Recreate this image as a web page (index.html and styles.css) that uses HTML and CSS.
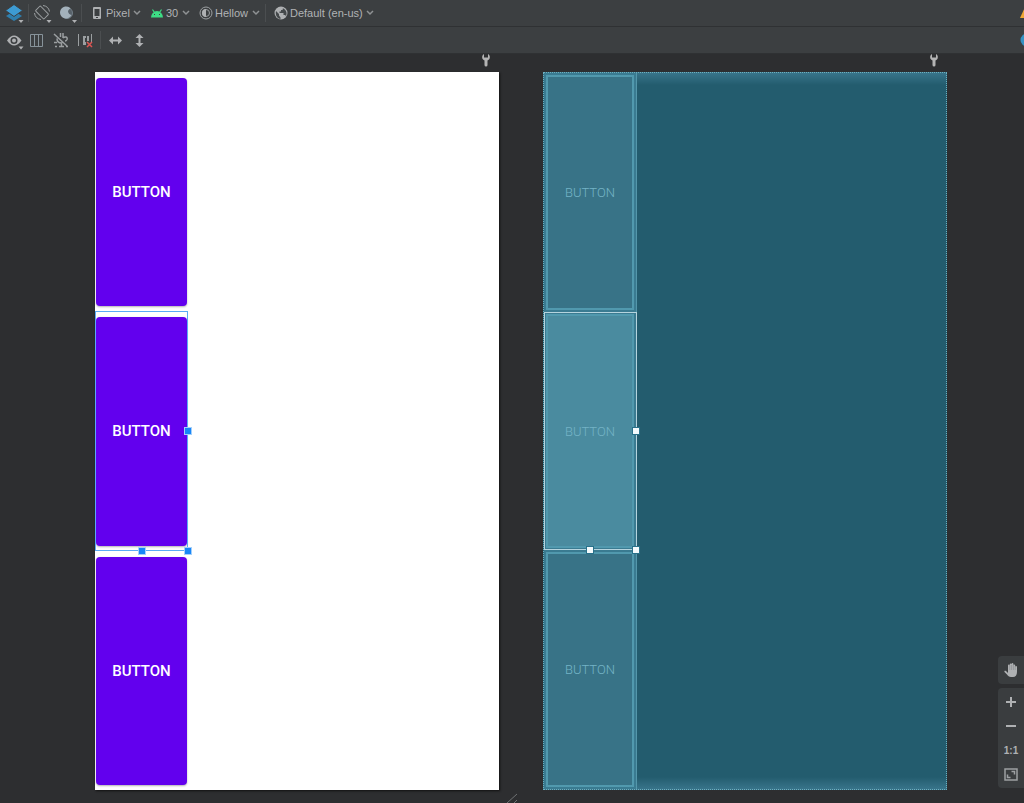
FILE: index.html
```
<!DOCTYPE html>
<html lang="en">
  <head>
    <meta charset="utf-8">
    <title>Layout Editor</title>
    <link rel="stylesheet" href="styles.css">
  </head>
  <body>
    <div class="toolbar">
      <button class="tool" aria-label="Select design surface">
        <svg width="20" height="20" viewBox="0 0 20 20"><path d="M10 8l8 5-8 5-8-5z" fill="#2f7fae"/><path d="M10 1.500l8.500 6L10 13.500 1.500 7.500z" fill="#3d9bd3" stroke="#3c3f41"/><path class="light" d="M14.500 17h5l-2.500 3z"/></svg>
      </button>
      <span class="separator"></span>
      <button class="tool" aria-label="Orientation">
        <svg width="20" height="20" viewBox="0 0 20 20"><g class="line"><rect x="5.500" y="3.500" width="7" height="12" rx="1" transform="rotate(-45 9 9.500)"/><path d="M10 2.500a7.500 7.500 0 0 1 6.500 6M8 16.500A7.500 7.500 0 0 1 1.500 10"/></g><path class="light" d="M13.500 17h5L16 20z"/></svg>
      </button>
      <button class="tool" aria-label="Night mode">
        <svg width="20" height="20" viewBox="0 0 20 20"><circle cx="10" cy="10" r="5.500" fill="#566068" stroke="#737f88"/><path d="M13.500 5.500A6 6 0 1 0 9 15.500a7 7 0 0 0 5.500-3.500A4.500 4.500 0 0 1 11 8a5 5 0 0 1 2.500-2.500z" fill="#a3b1bb"/><path class="light" d="M15 17h5l-2.500 3z"/></svg>
      </button>
      <span class="separator"></span>
      <label class="dropdown">
        <svg width="14" height="14" viewBox="0 0 14 14"><path class="light" fill-rule="evenodd" d="M4 1h6a1 1 0 0 1 1 1v10a1 1 0 0 1-1 1H4a1 1 0 0 1-1-1V2a1 1 0 0 1 1-1zm.500 2v7h5V3zM6 11v1h2v-1z"/></svg>
        <select aria-label="Device"><option>Pixel</option></select>
        <svg class="chevron" width="8" height="6" viewBox="0 0 8 6"><path d="M1 1l3 3 3-3"/></svg>
      </label>
      <label class="dropdown">
        <svg width="14" height="14" viewBox="0 0 14 14"><path d="M1 11.500a6 6.500 0 0 1 12 0z" fill="#3ddc84"/><path d="M2.500 3.500l2 3m7-3l-2 3" stroke="#3ddc84" stroke-width="1.200"/><path d="M4 8h1v1H4zm5 0h1v1H9z" fill="#3c3f41"/></svg>
        <select aria-label="API level"><option>30</option></select>
        <svg class="chevron" width="8" height="6" viewBox="0 0 8 6"><path d="M1 1l3 3 3-3"/></svg>
      </label>
      <label class="dropdown">
        <svg width="14" height="14" viewBox="0 0 14 14"><circle class="line" cx="7" cy="7" r="6"/><circle class="line" cx="7" cy="7" r="3.500"/><path class="light" d="M7 3a4 4 0 0 0 0 8z"/></svg>
        <select aria-label="Theme"><option>Hellow</option></select>
        <svg class="chevron" width="8" height="6" viewBox="0 0 8 6"><path d="M1 1l3 3 3-3"/></svg>
      </label>
      <span class="separator"></span>
      <label class="dropdown">
        <svg width="14" height="14" viewBox="0 0 14 14"><circle class="light" cx="7" cy="7" r="6.500"/><path d="M2 5l3 3v1.500l1.500 2V13C3.500 12.500 1 9.500 2 5zM8 2l1 .500-.500 1.500H7v1.500H5.500V7h4v2H11l1 1c1.500-3 0-7-4-8z" fill="#45494b"/></svg>
        <select aria-label="Locale"><option>Default (en-us)</option></select>
        <svg class="chevron" width="8" height="6" viewBox="0 0 8 6"><path d="M1 1l3 3 3-3"/></svg>
      </label>
      <button class="tool status" aria-label="Warnings">
        <svg width="14" height="14" viewBox="0 0 14 14"><path d="M0 12L5 1l7 11z" fill="#f0a732"/></svg>
      </button>
    </div>

    <div class="toolbar">
      <button class="tool" aria-label="View options">
        <svg width="20" height="20" viewBox="0 0 20 20"><path class="light" fill-rule="evenodd" d="M3 10.500Q10 .500 17.500 10.500 10 20.500 3 10.500zM10 7a3.500 3.500 0 1 0 0 7 3.500 3.500 0 0 0 0-7z"/><circle class="light" cx="10" cy="10.500" r="2"/><path class="light" d="M14.500 16.500h5l-2.500 3z"/></svg>
      </button>
      <button class="tool" aria-label="Column guides">
        <svg width="20" height="20" viewBox="0 0 20 20"><path d="M2.500 4.500h12v12h-12zM6.500 4.500v12m4-12v12" fill="none" stroke="#87939a"/></svg>
      </button>
      <button class="tool" aria-label="Autoconnect off">
        <svg width="20" height="20" viewBox="0 0 20 20"><g class="line heavy"><path d="M2 4l13 12M8.500 3v4M11 3v5M11 8c2-2 5-1 4 1.500-.500 1-1 1.500-2 1.500M5 8.500c0 3 1 4.500 4.500 4.500v3"/><path d="M2 12.500h3M3 16.500h2m2 0h5m2 0h2"/></g></svg>
      </button>
      <button class="tool" aria-label="Clear constraints">
        <svg width="20" height="20" viewBox="0 0 20 20"><path class="line" d="M2.500 4v12M15.500 4v8"/><path d="M7 6h3v2H9v4h1v3H7zm4 0h2v5h-2z" fill="#9b9fa1"/><path d="M11 12l5 5m0-5l-5 5" stroke="#db5452" stroke-width="1.500"/></svg>
      </button>
      <span class="separator"></span>
      <button class="tool" aria-label="Expand horizontally">
        <svg width="20" height="20" viewBox="0 0 20 20"><path class="light" d="M4 10.500l4-4v3h5v-3l4 4-4 4v-3H8v3z"/></svg>
      </button>
      <button class="tool" aria-label="Expand vertically">
        <svg width="20" height="20" viewBox="0 0 20 20"><path class="light" d="M10.500 4l4 4h-3v5h3l-4 4-4-4h3V8h-3z"/></svg>
      </button>
      <button class="tool status" aria-label="Help">
        <svg width="14" height="14" viewBox="0 0 14 14"><circle cx="7" cy="7" r="6.500" fill="#3592c4"/></svg>
      </button>
    </div>

    <main class="canvas">
      <section class="view">
        <svg class="wrench" width="10" height="14" viewBox="0 0 10 14"><path d="M3 1C1 2 .500 5 2 6.500l1.500 1V12a1.500 1.500 0 0 0 3 0V7.500l1.500-1C9.500 5 9 2 7 1v3.500H3z"/></svg>
        <div class="screen design">
          <div class="slot"><button class="material">BUTTON</button></div>
          <div class="slot selected">
            <button class="material">BUTTON</button>
            <i class="handle right"></i><i class="handle bottom"></i><i class="handle corner"></i>
          </div>
          <div class="slot"><button class="material">BUTTON</button></div>
        </div>
      </section>

      <section class="view">
        <svg class="wrench" width="10" height="14" viewBox="0 0 10 14"><path d="M3 1C1 2 .500 5 2 6.500l1.500 1V12a1.500 1.500 0 0 0 3 0V7.500l1.500-1C9.500 5 9 2 7 1v3.500H3z"/></svg>
        <div class="screen blueprint">
          <div class="slot"><button class="outline">BUTTON</button></div>
          <div class="slot selected">
            <button class="outline">BUTTON</button>
            <i class="handle right"></i><i class="handle bottom"></i><i class="handle corner"></i>
          </div>
          <div class="slot"><button class="outline">BUTTON</button></div>
        </div>
      </section>

      <div class="zoom">
        <div class="zoom-group">
          <button aria-label="Pan">
            <svg width="16" height="16" viewBox="0 0 16 16"><path class="light" d="M5 8V3.500a.9.900 0 0 1 1.800 0V2.500a.9.900 0 0 1 1.800 0V2a.9.900 0 0 1 1.800 0v1.500a.9.900 0 0 1 1.800 0V5a.9.900 0 0 1 1.800 0v5c0 3-1.500 5-4 5H8c-2 0-3-1-4-2.500L1.500 10C1 9 2 8.300 3 9l2 2z"/><path d="M6.800 3v5m1.800-5v5m1.800-5v5m1.800-4v4" stroke="#6f7274" stroke-width=".4"/></svg>
          </button>
        </div>
        <div class="zoom-group">
          <button aria-label="Zoom in">
            <svg width="16" height="16" viewBox="0 0 16 16"><path class="light" d="M7 3h2v4h4v2H9v4H7V9H3V7h4z"/></svg>
          </button>
          <button aria-label="Zoom out">
            <svg width="16" height="16" viewBox="0 0 16 16"><path class="light" d="M3 7h10v2H3z"/></svg>
          </button>
          <button>1:1</button>
          <button aria-label="Zoom to fit">
            <svg width="16" height="16" viewBox="0 0 16 16"><g fill="none" stroke="#9da0a2" stroke-width="1.500"><path d="M2 3h12v11H2z"/><path d="M8.500 5.500h3v3M4.500 8.500v3h3"/></g></svg>
          </button>
        </div>
      </div>
      <svg class="grip" width="12" height="10" viewBox="0 0 12 10"><path d="M1 10L11 1M8 10l3-3"/></svg>
    </main>
  </body>
</html>
```
FILE: styles.css
```
* {
  box-sizing: border-box;
}

body {
  margin: 0;
  min-height: 100vh;
  display: flex;
  flex-direction: column;
  background: #2d2e30;
  color: #bbbbbb;
  font-family: "Liberation Sans", Arial, sans-serif;
  font-size: 11px;
  overflow: hidden;
}

button,
select {
  margin: 0;
  padding: 0;
  border: none;
  background: none;
  color: inherit;
  font: inherit;
}

svg {
  display: block;
  flex: none;
}

.light {
  fill: #afb1b3;
}

.line {
  fill: none;
  stroke: #9b9fa1;
}

.heavy {
  stroke-width: 1.5;
}

/* toolbars */
.toolbar {
  display: flex;
  align-items: center;
  gap: 4px;
  height: 27px;
  padding-left: 4px;
  background: #3c3f41;
  border-bottom: 1px solid #2f3133;
}

.tool {
  display: flex;
  width: 20px;
  height: 20px;
  align-items: center;
}

.separator {
  width: 1px;
  height: 18px;
  background: #4b4e50;
}

.dropdown {
  display: flex;
  align-items: center;
  gap: 2px;
  margin: 0 1px 0 4px;
}

.dropdown select {
  appearance: none;
  color: #b1b3b5;
}

.chevron {
  margin-left: 1px;
  fill: none;
  stroke: #8f9294;
  stroke-width: 1.5;
}

.status {
  width: 14px;
  margin-left: auto;
  margin-right: -10px;
}

/* design surface */
.canvas {
  position: relative;
  flex: 1;
  display: flex;
  gap: 44px;
  padding: 0 77px 13px 95px;
}

.view {
  flex: 1;
  display: flex;
  flex-direction: column;
}

.wrench {
  align-self: flex-end;
  margin: -1px 8px 5px 0;
  fill: #b4b4b4;
}

.screen {
  flex: 1;
  display: flex;
  flex-direction: column;
  align-items: flex-start;
}

.slot {
  position: relative;
  flex: 1;
  display: flex;
  width: 93px;
}

.design {
  background: #ffffff;
  box-shadow: 1px 1px 2px #111111;
}

.design .slot {
  padding: 6px 1px 5px;
}

.material {
  flex: 1;
  border-radius: 4px;
  background: #6200ee;
  box-shadow: 0 1px 2px rgba(0, 0, 0, 0.3);
  color: #ffffff;
  font-family: Roboto, sans-serif;
  font-size: 15px;
  font-weight: 500;
}

.design .selected {
  outline: 1px solid #5aaaf5;
  outline-offset: -1px;
}

.blueprint {
  border: 1px dotted #6fb0c0;
  background: linear-gradient(#38748a, #235c6e 12px, #235c6e calc(100% - 12px), #38748a);
}

.blueprint .slot {
  padding: 2px;
  background: #3a7b91;
  border-right: 1px solid #5497ab;
}

.outline {
  flex: 1;
  border: 2px solid #5199ae;
  background: #387387;
  color: #74b3c6;
  font-family: Roboto, sans-serif;
  font-size: 13px;
  font-weight: 300;
}

.blueprint .selected {
  z-index: 1;
  outline: 1px solid #b5d4de;
  outline-offset: -1px;
}

.selected .outline {
  background: #4a8b9f;
}

.handle {
  position: absolute;
  width: 8px;
  height: 8px;
  background: #1886f7;
  border: 1px solid #a5d0fa;
}

.blueprint .handle {
  background: #f3fafc;
  border-color: #28718a;
}

.handle.right {
  top: calc(50% - 4px);
  right: -4px;
}

.handle.bottom {
  bottom: -4px;
  left: calc(50% - 4px);
}

.handle.corner {
  right: -4px;
  bottom: -4px;
}

/* zoom controls float over the surface */
.zoom {
  position: absolute;
  right: 0;
  bottom: 15px;
  display: flex;
  flex-direction: column;
  gap: 4px;
}

.zoom-group {
  display: flex;
  flex-direction: column;
  padding: 2px 0;
  border-radius: 4px 0 0 4px;
  background: #3a3d3f;
}

.zoom-group button {
  display: flex;
  align-items: center;
  justify-content: center;
  width: 26px;
  height: 24px;
  color: #afb1b3;
  font-size: 10px;
  font-weight: bold;
}

.grip {
  position: absolute;
  left: calc(50% - 6px);
  bottom: 0;
  fill: none;
  stroke: #707274;
}
```
